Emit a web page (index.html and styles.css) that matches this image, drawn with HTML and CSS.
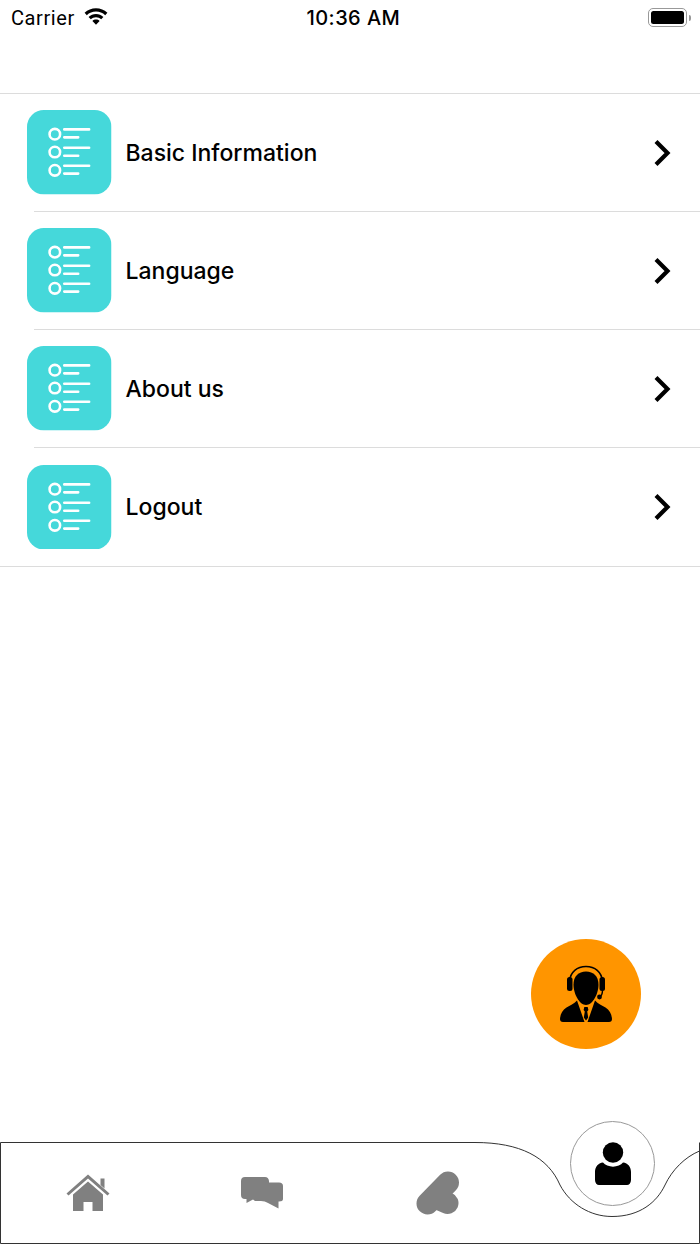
FILE: index.html
```html
<!DOCTYPE html>
<html lang="en">
<head>
    <meta charset="UTF-8">
    <meta name="viewport" content="width=device-width, initial-scale=1.0">
    <title>Settings</title>
    <link rel="stylesheet" href="styles.css">
</head>
<body>
    <svg class="icon-defs" width="0" height="0">
        <defs>
            <symbol id="list-icon" viewBox="0 0 85 85">
                <rect width="85" height="85" rx="17" fill="#45d8da"/>
                <g fill="none" stroke="#fff" stroke-width="2.6" stroke-linecap="round">
                    <circle cx="28" cy="24.300" r="5.300"/>
                    <circle cx="28" cy="42.300" r="5.300"/>
                    <circle cx="28" cy="60.700" r="5.300"/>
                    <path d="M37.500 19.500H62.500M37.500 27.500H51.500M37.500 38H62.500M37.500 46H51.500M37.500 56H62.500M37.500 64H51.500"/>
                </g>
            </symbol>
            <symbol id="chevron" viewBox="0 0 18 26">
                <path d="M3 1.500L14.500 13L3 24.500" fill="none" stroke="#000" stroke-width="4.200"/>
            </symbol>
        </defs>
    </svg>

    <div class="page">
        <div class="status-bar">
            <div class="status-left">
                <span class="carrier">Carrier</span>
                <svg class="wifi" width="24" height="17" viewBox="0 0 24 17">
                    <path d="M12 .3C7.6.3 3.7 2 .6 4.8l2.2 2.4C5.3 5 8.5 3.6 12 3.6s6.700 1.400 9.200 3.600l2.200-2.400C20.300 2 16.400.3 12 .3z"/>
                    <path d="M12 6C9.200 6 6.600 7.100 4.600 8.900l2.200 2.400c1.400-1.200 3.200-2 5.200-2s3.800.800 5.200 2l2.200-2.400C17.400 7.100 14.800 6 12 6z"/>
                    <path d="M12 11.600c-1.400 0-2.700.500-3.600 1.400L12 16.800l3.600-3.800c-.900-.900-2.200-1.400-3.600-1.400z"/>
                </svg>
            </div>
            <span class="time">10:36 AM</span>
            <div class="battery">
                <div class="battery-body"><div class="battery-fill"></div></div>
                <div class="battery-cap"></div>
            </div>
        </div>

        <div class="menu">
            <div class="divider"></div>
            <a class="menu-row">
                <svg class="menu-icon"><use href="#list-icon"/></svg>
                <span class="menu-label">Basic Information</span>
                <svg class="menu-arrow"><use href="#chevron"/></svg>
            </a>
            <div class="divider inset"></div>
            <a class="menu-row">
                <svg class="menu-icon"><use href="#list-icon"/></svg>
                <span class="menu-label">Language</span>
                <svg class="menu-arrow"><use href="#chevron"/></svg>
            </a>
            <div class="divider inset"></div>
            <a class="menu-row">
                <svg class="menu-icon"><use href="#list-icon"/></svg>
                <span class="menu-label">About us</span>
                <svg class="menu-arrow"><use href="#chevron"/></svg>
            </a>
            <div class="divider inset"></div>
            <a class="menu-row last">
                <svg class="menu-icon"><use href="#list-icon"/></svg>
                <span class="menu-label">Logout</span>
                <svg class="menu-arrow"><use href="#chevron"/></svg>
            </a>
            <div class="divider"></div>
        </div>

        <div class="fab-area">
            <button class="fab">
                <svg width="52" height="58" viewBox="0 0 52 58">
                    <path d="M26 6.500c-7.500 0-12.500 5-12.500 13 0 9.500 6 20.500 12.500 20.500s12.500-11 12.500-20.500C38.500 11.500 33.500 6.500 26 6.500z"/>
                    <path d="M9.500 16C10.500 7 17 1.500 26 1.500S41.500 7 42.500 16" fill="none" stroke="#000" stroke-width="1.500"/>
                    <rect x="7" y="12" width="5.500" height="14" rx="2.500"/>
                    <rect x="39.500" y="12" width="5.500" height="14" rx="2.500"/>
                    <path d="M42.500 25c0 4-1 6-3 7" fill="none" stroke="#000" stroke-width="1.400"/>
                    <circle cx="39.500" cy="32" r="2.400"/>
                    <path d="M17 35.500L24.500 57H3c-2 0-3-1-3-3 .3-5 2.500-9 6.500-11.500 3.500-2 7.500-3.500 10.500-7z"/>
                    <path d="M35 35.500L27.500 57H49c2 0 3-1 3-3-.3-5-2.500-9-6.500-11.500-3.500-2-7.500-3.500-10.500-7z"/>
                    <path d="M24.300 42h3.400l.7 3-1.200 1.500 1 6-2.200 3-2.200-3 1-6-1.200-1.500z"/>
                </svg>
            </button>
        </div>

        <nav class="tab-bar">
            <svg class="tab-shape" width="700" height="102" viewBox="0 0 700 102">
                <path d="M699.500 9C685 15 672 28 665 43C657 60 640 74.500 612 74.500C590 74.500 570 62 560 43C548 15 520 .5 475 .5H.5V101.500H699.500V.5" fill="#fff" stroke="#333" stroke-width="1"/>
            </svg>
            <div class="tabs">
                <a class="tab">
                    <svg width="44" height="38" viewBox="0 0 44 38" fill="#808080">
                        <path d="M22 .5L43.500 19.500 41.500 21.500 22 4.500 2.500 21.500 .5 19.500z"/>
                        <path d="M34.500 4.500h4v10l-4-3.500z"/>
                        <path d="M22 7.500L37 20.500V37H26.500V28H17.500V37H7V20.500z"/>
                    </svg>
                </a>
                <a class="tab">
                    <svg width="44" height="33" viewBox="0 0 44 33" fill="#808080">
                        <path d="M4 0H24Q27.500 0 28 4V5.500H38Q42 5.500 42 9V22Q42 24.500 38 24.500H37.500V31.500L27 26Q24 24 20 24H14L12 22.500 5.500 26V22H4Q0 22 0 18V4Q0 0 4 0z"/>
                    </svg>
                </a>
                <a class="tab">
                    <svg width="44" height="44" viewBox="0 0 44 44">
                        <path d="M11.500 32.500L32 11.500M20 27L31.500 32" fill="none" stroke="#808080" stroke-width="22" stroke-linecap="round"/>
                    </svg>
                </a>
            </div>
            <div class="profile-tab">
                <svg width="36" height="44" viewBox="0 0 36 44">
                    <circle cx="18" cy="10.500" r="10.200"/>
                    <path d="M8 20.500C12 26 24 26 28 20.500C33 21 36 25 36 30V38C36 41 34 43 32 43H4C2 43 0 41 0 38V30C0 25 3 21 8 20.500z"/>
                </svg>
            </div>
        </nav>
    </div>
</body>
</html>
```

FILE: styles.css
```css
* {
    box-sizing: border-box;
}

body {
    font-family: "Inter", "Liberation Sans", sans-serif;
    background-color: #fff;
    margin: 0;
    padding: 0;
    color: #000;
}

.icon-defs {
    position: absolute;
}

.page {
    display: flex;
    flex-direction: column;
    height: 1244px;
    overflow: hidden;
}

/* status bar */
.status-bar {
    display: flex;
    align-items: center;
    justify-content: space-between;
    height: 36px;
    padding: 0 9px 0 11px;
    flex-shrink: 0;
    position: relative;
}

.status-left {
    display: flex;
    align-items: center;
    gap: 9px;
}

.carrier {
    font-family: "Roboto", sans-serif;
    font-size: 20px;
    letter-spacing: 0.6px;
}

.wifi {
    margin-top: -3px;
}

.time {
    position: absolute;
    left: 306.500px;
    font-size: 20px;
    font-weight: 500;
    letter-spacing: 0.45px;
}

.battery {
    display: flex;
    align-items: center;
    gap: 2px;
    margin-top: -1px;
}

.battery-body {
    width: 39px;
    height: 19px;
    padding: 2px;
    border: 1.500px solid #999;
    border-radius: 5px;
}

.battery-fill {
    width: 100%;
    height: 100%;
    background-color: #000;
    border-radius: 2.500px;
}

.battery-cap {
    width: 2px;
    height: 6px;
    background-color: #999;
    border-radius: 0 2px 2px 0;
}

/* menu */
.menu {
    margin-top: 57px;
    flex-shrink: 0;
}

.divider {
    height: 1px;
    background-color: #dcdcdc;
}

.divider.inset {
    margin-left: 34px;
}

.menu-row {
    display: flex;
    align-items: center;
    height: 117px;
    padding-left: 27px;
    padding-right: 29px;
}

.menu-row.last {
    height: 118px;
}

.menu-icon {
    width: 84.500px;
    height: 84.500px;
    flex-shrink: 0;
}

.menu-label {
    flex: 1;
    margin-left: 14px;
    font-size: 23px;
    font-weight: 500;
}

.menu-arrow {
    width: 18px;
    height: 26px;
}

/* floating button */
.fab-area {
    flex: 1;
    display: flex;
    justify-content: flex-end;
    align-items: flex-end;
    padding: 0 59px 93px 0;
}

.fab {
    display: flex;
    align-items: center;
    justify-content: center;
    width: 110px;
    height: 110px;
    padding: 0;
    border: none;
    border-radius: 50%;
    background-color: #ff9500;
}

/* bottom tabs */
.tab-bar {
    position: relative;
    height: 102px;
    flex-shrink: 0;
}

.tab-shape {
    position: absolute;
    left: 0;
    top: 0;
}

.tabs {
    position: relative;
    display: flex;
    width: 525px;
    height: 100%;
}

.tab {
    flex: 1;
    display: flex;
    align-items: center;
    justify-content: center;
}

.profile-tab {
    position: absolute;
    left: 570px;
    top: -21px;
    width: 85px;
    height: 85px;
    display: flex;
    align-items: center;
    justify-content: center;
    background-color: #fff;
    border: 1px solid #999;
    border-radius: 50%;
}
```
